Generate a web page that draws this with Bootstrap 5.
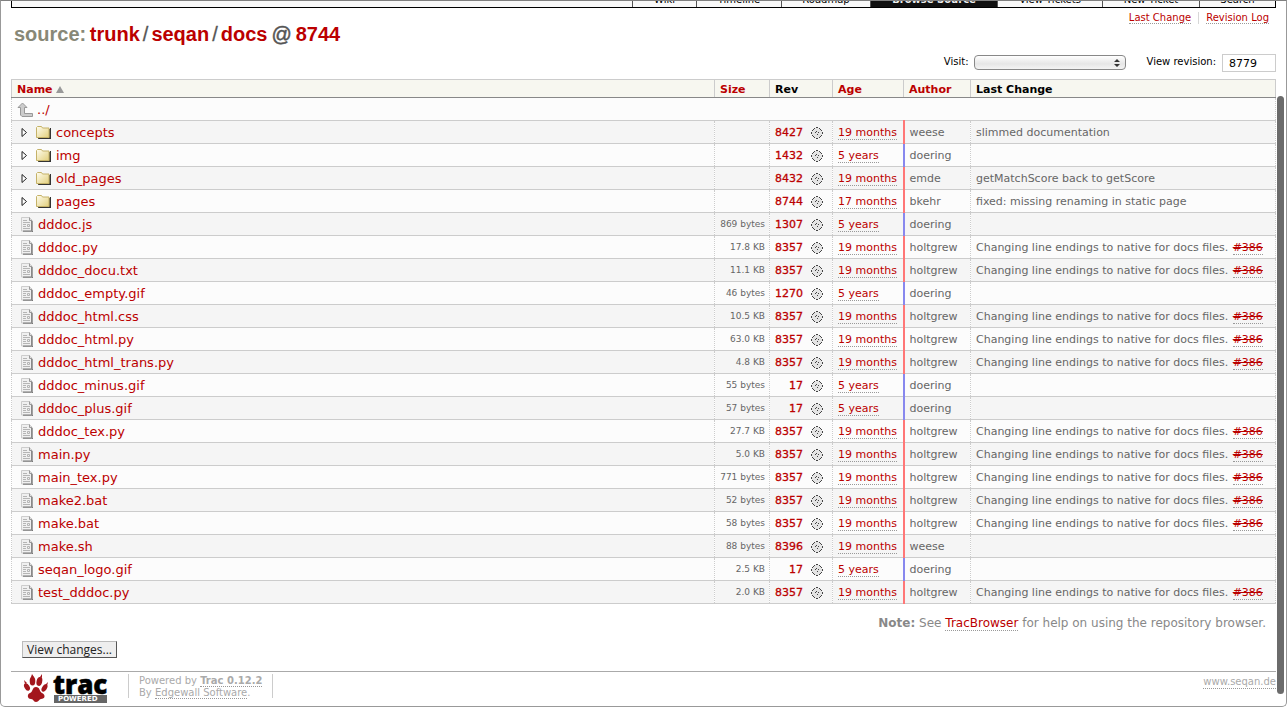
<!DOCTYPE html>
<html lang="en">
<head>
<meta charset="utf-8">
<meta name="viewport" content="width=device-width, initial-scale=1">
<title>docs – SeqAn – Trac</title>
<link href="https://cdn.jsdelivr.net/npm/bootstrap@5.3.0/dist/css/bootstrap.min.css" rel="stylesheet">
<style>
body { font-family: "DejaVu Sans", Verdana, sans-serif; font-size: 11px; line-height: 14px; color: #000; background: #fff; }
a { color: #b00; text-decoration: none; }
.dotted { border-bottom: 1px dotted #999; }
.frame { border: 1px solid #999; border-top-color: #808080; border-radius: 0 0 5px 5px; padding: 0 10px; overflow: hidden; }
.mainnav { height: 7px; border: 1px solid #000; border-top: 0; overflow: hidden; background: #f9f9f9; font-size: 10px; }
.mainnav a { color: #000; border-left: 1px solid #555; height: 14px; line-height: 14px; text-align: center; }
.mainnav a.active { background: #111; color: #eee; font-weight: bold; }
.tab-1 { width: 64px; } .tab-2 { width: 85px; } .tab-3 { width: 89px; } .tab-4 { width: 127px; }
.tab-5 { width: 105px; } .tab-6 { width: 97px; } .tab-7 { width: 76px; }
h1 { font: bold 20px/24px "Liberation Sans", Arial, sans-serif; color: #555; margin: 14px 0 0 3px; }
h1 .first { color: #887; margin-right: -2px; }
h1 .sep { padding: 0 3px; -webkit-text-stroke: 0.3px #555; font-weight: normal; }
h1 .at { padding: 0 4px; -webkit-text-stroke: 0.5px #555; font-weight: normal; }
.ctxtnav { font-size: 10px; line-height: 12px; padding: 4px 7px 0 0; }
.ctxtnav li + li { border-left: 1px solid #d7d7d7; margin-left: 7px; padding-left: 7px; }
.jump { height: 33px; font-size: 10px; padding-top: 8px; }
.jump label { line-height: 16px; }
.jump select { width: 152px; height: 15px; border: 1px solid #888; border-radius: 4px; background: linear-gradient(#fff, #e6e6e6 60%, #f4f4f4); appearance: none; display: block; margin-top: 1px; }
.picker { margin-right: 21px; }
.picker svg { position: absolute; right: 6px; top: 4px; }
.visit { margin-right: 5px; }
.revlabel { margin-right: 6px; }
.jump input { width: 54px; height: 18px; border: 1px solid #ccc; padding: 0 6px; font-size: 11px; }
.dirlist { width: 100%; table-layout: fixed; border-collapse: collapse; border: 1px dotted #ccc; border-top: 1px solid #ccc; border-bottom: 1px solid #ccc; }
.dirlist th { height: 18px; line-height: 14px; padding: 2px 5px 0; background: #f7f7f0; border: 1px solid #ccc; border-bottom-color: #888; font-size: 11px; }
.dirlist td { height: 23px; padding: 1px 5px 0; border: 1px dotted #ccc; border-top: 1px solid #ccc; border-bottom: 1px solid #ccc; color: #666; white-space: nowrap; overflow: hidden; }
.dirlist tbody tr { background: #fcfcfc; }
.dirlist tbody tr:nth-child(even) { background: #f5f5f5; }
.c-size { width: 55px; } .c-rev { width: 63px; } .c-age { width: 71px; } .c-author { width: 67px; } .c-change { width: 305px; }
.dirlist .fname { font-size: 13px; line-height: 16px; }
.dirlist .fsize { font-size: 9px; text-align: right; padding: 0 4px; }
.dirlist .recent { border-right: 2px solid #f77; }
.dirlist .old { border-right: 2px solid #88e; }
.rev { width: 28px; text-align: right; -webkit-text-stroke: 0.3px #b00; }
.closed { text-decoration: line-through; margin-left: 1px; }
.help { color: #888; font-size: 12px; margin: 11px 10px 0 0; line-height: 16px; }
.changes { margin: 10px 0 0 11px; width: 95px; height: 17px; border: 1px solid #bbb; border-right-color: #555; border-bottom-color: #555; background: #eee; color: #222; font: 12px/14px "Open Sans", "Noto Sans", sans-serif; padding: 0; }
footer { border-top: 1px solid #aaa; margin-top: 13px; height: 34px; color: #aaa; font-size: 10px; line-height: 12px; }
footer a { color: #aaa; }
.powered { border: solid #ccc; border-width: 0 1px; height: 24px; padding: 1px 10px 0; margin: 2px 0 0 21px; }
.logo { width: 96px; height: 32px; padding-left: 12px; gap: 4px; }
.wordmark { font: 800 26px/24px "Open Sans", sans-serif; color: #000; height: 23px; -webkit-text-stroke: 0.5px #000; }
.plate { font-size: 7px; line-height: 8px; background: #666; color: #fff; padding: 0 4px; margin-left: 1px; }
.thumb { position: absolute; right: 2px; top: 95px; bottom: 12px; width: 7px; border-radius: 4px; background: #6b6b6b; }
</style>
<script src="https://cdn.jsdelivr.net/npm/bootstrap@5.3.0/dist/js/bootstrap.bundle.min.js"></script>
</head>
<body>
<svg class="position-absolute" width="0" height="0" aria-hidden="true">
  <linearGradient id="gold" x2="1" y2="1"><stop offset="0" stop-color="#fffdf0"/><stop offset="1" stop-color="#e2cf7c"/></linearGradient>
  <symbol id="i-folder" viewBox="0 0 16 15"><path d="M2 4h13v10H2z" fill="#55533c"/><path d="M14 3h1v11H3v-1h11z" fill="#333"/><path d="M.5 12.500V2.500l1-1h4l1 1.500h6.500v9.500z" fill="url(#gold)" stroke="#c5b268"/></symbol>
  <symbol id="i-file" viewBox="0 0 13 16"><path d="M10 4h2v11H2v-1h8z" fill="#777"/><path d="M.5.5h8l2.500 2.500v11H.5z" fill="#f0f0f0" stroke="#ccc"/><path d="M10.500 4v10H2" fill="none" stroke="#888"/><path d="M8.500.5v3h2.500" fill="#ddd" stroke="#999"/><path d="M2 3.500h4M2 5.500h7M2 7.500h3M2 9.500h3M2 11.500h7M6.500 7.500h2v2h-2z" fill="none" stroke="#b5b5b5"/></symbol>
  <symbol id="i-up" viewBox="0 0 16 16"><path d="M5.500 1l4.500 4.500H7.500v6h8v3H5l-1.500-1.500V5.500H1z" fill="#ccc" stroke="#999"/></symbol>
  <symbol id="i-tri" viewBox="0 0 7 9"><path d="M1 .5v8l4.500-4z" fill="#fff" stroke="#222"/></symbol>
  <symbol id="i-gear" viewBox="0 0 12 12"><path d="M4 1h1V0h2v1h1v1h2v2h1v1h1v2h-1v1h-1v2H8v1H7v1H5v-1H4v-1H2V8H1V7H0V5h1V4h1V2h2z" fill="#e4e4e4"/><path d="M5 0h2v1H5zM5 11h2v1H5zM0 5h1v2H0zM11 5h1v2h-1zM3 1h1v1H3zM8 1h1v1H8zM1 3h1v1H1zM10 3h1v1h-1zM1 8h1v1H1zM10 8h1v1h-1zM3 10h1v1H3zM8 10h1v1H8zM2 2h1v1H2zM9 2h1v1H9zM2 9h1v1H2zM9 9h1v1H9zM5 4h1v1H5zM4 5h1v1H4zM7 5h1v1H7zM6 7h1v1H6z" fill="#444"/></symbol>
</svg>
<div class="frame min-vh-100 position-relative">
  <nav class="mainnav d-flex justify-content-end align-items-end" aria-label="Main">
    <a class="tab-1" href="#">Wiki</a><a class="tab-2" href="#">Timeline</a><a class="tab-3" href="#">Roadmap</a><a class="tab-4 active" href="#">Browse Source</a><a class="tab-5" href="#">View Tickets</a><a class="tab-6" href="#">New Ticket</a><a class="tab-7" href="#">Search</a>
  </nav>
  <main>
    <div class="d-flex justify-content-between align-items-start">
      <h1><span class="first">source:</span> <a href="#">trunk</a><span class="sep">/</span><a href="#">seqan</a><span class="sep">/</span><a href="#">docs</a><span class="at">@</span><a href="#">8744</a></h1>
      <ul class="ctxtnav list-unstyled d-flex mb-0">
        <li><a class="dotted" href="#">Last Change</a></li>
        <li><a class="dotted" href="#">Revision Log</a></li>
      </ul>
    </div>
    <form class="jump d-flex justify-content-end align-items-start">
      <label for="visit" class="visit">Visit:</label>
      <span class="picker position-relative d-flex"><select id="visit"><option></option></select>
        <svg width="6" height="10"><path d="M0 4l3-3 3 3zM0 6l3 3 3-3z" fill="#333"/></svg></span>
      <label for="rev" class="revlabel">View revision:</label>
      <input id="rev" type="text" value="8779">
    </form>
    <table class="dirlist">
      <thead><tr>
        <th><a href="#">Name <svg width="8" height="7" class="align-baseline"><path d="M0 7l4-7 4 7z" fill="#999"/></svg></a></th>
        <th class="c-size"><a href="#">Size</a></th><th class="c-rev">Rev</th><th class="c-age"><a href="#">Age</a></th><th class="c-author"><a href="#">Author</a></th><th class="c-change">Last Change</th>
      </tr></thead>
      <tbody id="entries">
        <tr><td class="fname" colspan="6"><a class="d-flex align-items-center" href="#"><svg width="16" height="16" class="me-1"><use href="#i-up"/></svg>../</a></td></tr>
      </tbody>
    </table>
    <p class="help text-end mb-0"><strong>Note:</strong> See <a class="dotted" href="#">TracBrowser</a> for help on using the repository browser.</p>
    <button class="changes d-block" type="button">View changes...</button>
  </main>
  <footer class="d-flex align-items-start">
    <a href="#" class="logo d-flex" aria-label="Trac Powered"><svg class="flex-shrink-0" width="26" height="32" viewBox="6 0 26 32">
      <g fill="#a3161c"><ellipse cx="15.500" cy="9" rx="2.800" ry="4.500"/><ellipse cx="22.500" cy="9.500" rx="2.800" ry="4.500" transform="rotate(14 22.500 9)"/><ellipse cx="10" cy="15" rx="2.500" ry="4" transform="rotate(-30 10 15)"/><ellipse cx="27.500" cy="16" rx="2.400" ry="4" transform="rotate(32 27.500 16)"/><path d="M19 15c4 0 3 4 6 6 4 2 3 6-1 6-2 0-2 3-5 3s-2-3-5-3c-4 0-4-5-1-6s2-6 6-6z"/><path d="M14 5l1-3 2 3zM23 5l2-3v4zM8 12l-1-4 3 3zM28 13l3-3-1 4z"/></g></svg>
      <span class="d-flex flex-column"><span class="wordmark">trac</span><span class="plate fw-bold">POWERED</span></span></a>
    <div class="powered">Powered by <a class="dotted fw-bold" href="#">Trac 0.12.2</a><br>By <a class="dotted" href="#">Edgewall Software</a>.</div>
    <a class="dotted ms-auto mt-1" href="#">www.seqan.de</a>
  </footer>
  <div class="thumb"></div>
</div>
<script>
const eol = 'Changing line endings to native for docs files. <a class="closed dotted" href="#">#386</a>';
// name, size (empty for directories), revision, age, author, message
const entries = [
  ['concepts', '', 8427, '19 months', 'weese', 'slimmed documentation'],
  ['img', '', 1432, '5 years', 'doering', ''],
  ['old_pages', '', 8432, '19 months', 'emde', 'getMatchScore back to getScore'],
  ['pages', '', 8744, '17 months', 'bkehr', 'fixed: missing renaming in static page'],
  ['dddoc.js', '869 bytes', 1307, '5 years', 'doering', ''],
  ['dddoc.py', '17.8 KB', 8357, '19 months', 'holtgrew', eol],
  ['dddoc_docu.txt', '11.1 KB', 8357, '19 months', 'holtgrew', eol],
  ['dddoc_empty.gif', '46 bytes', 1270, '5 years', 'doering', ''],
  ['dddoc_html.css', '10.5 KB', 8357, '19 months', 'holtgrew', eol],
  ['dddoc_html.py', '63.0 KB', 8357, '19 months', 'holtgrew', eol],
  ['dddoc_html_trans.py', '4.8 KB', 8357, '19 months', 'holtgrew', eol],
  ['dddoc_minus.gif', '55 bytes', 17, '5 years', 'doering', ''],
  ['dddoc_plus.gif', '57 bytes', 17, '5 years', 'doering', ''],
  ['dddoc_tex.py', '27.7 KB', 8357, '19 months', 'holtgrew', eol],
  ['main.py', '5.0 KB', 8357, '19 months', 'holtgrew', eol],
  ['main_tex.py', '771 bytes', 8357, '19 months', 'holtgrew', eol],
  ['make2.bat', '52 bytes', 8357, '19 months', 'holtgrew', eol],
  ['make.bat', '58 bytes', 8357, '19 months', 'holtgrew', eol],
  ['make.sh', '88 bytes', 8396, '19 months', 'weese', ''],
  ['seqan_logo.gif', '2.5 KB', 17, '5 years', 'doering', ''],
  ['test_dddoc.py', '2.0 KB', 8357, '19 months', 'holtgrew', eol]
];
document.getElementById('entries').insertAdjacentHTML('beforeend', entries.map(([name, size, rev, age, author, msg]) => `
  <tr>
    <td class="fname"><div class="d-flex align-items-center">${size ? '<svg width="13" height="16" class="ms-1 me-1"><use href="#i-file"/></svg>' : '<svg width="7" height="9" class="ms-1 me-2"><use href="#i-tri"/></svg><svg width="16" height="15" class="me-1"><use href="#i-folder"/></svg>'}<a href="#">${name}</a></div></td>
    <td class="fsize">${size}</td>
    <td><div class="d-flex align-items-center"><a class="rev" href="#">${rev}</a><svg width="12" height="12" class="ms-2"><use href="#i-gear"/></svg></div></td>
    <td class="${age === '5 years' ? 'old' : 'recent'}"><a class="dotted" href="#">${age}</a></td>
    <td>${author}</td>
    <td>${msg}</td>
  </tr>`).join(''));
</script>
</body>
</html>
